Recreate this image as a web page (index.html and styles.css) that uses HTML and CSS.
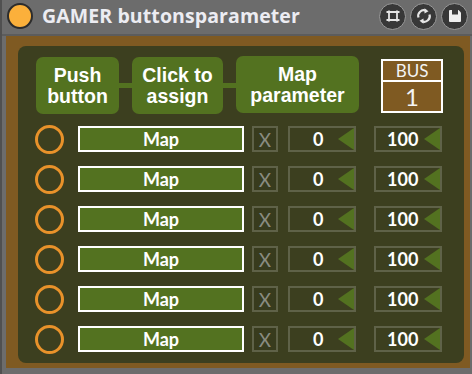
FILE: index.html
```html
<!DOCTYPE html>
<html>
<head>
<meta charset="utf-8">
<link rel="stylesheet" href="styles.css">
</head>
<body>
<div class="window">
  <div class="titlebar">
    <span class="dot"></span>
    <span class="title">GAMER buttonsparameter</span>
    <div class="tools">
      <span class="tool"><svg width="14" height="14" viewBox="-7 -7 14 14"><path d="M-6.5 -4 H6.5 M-6.5 4 H6.5 M-4 -5.5 V5.5 M4 -5.5 V5.5" stroke="#e6e6e6" stroke-width="1.8" fill="none"/></svg></span>
      <span class="tool"><svg width="16" height="16" viewBox="-8 -8 16 16"><path d="M-5.5 1.5 A5.5 5.5 0 0 1 2 -5.2" stroke="#e6e6e6" stroke-width="2.2" fill="none"/><path d="M5.5 -1.5 A5.5 5.5 0 0 1 -2 5.2" stroke="#e6e6e6" stroke-width="2.2" fill="none"/><path d="M0.5 -7.8 L4.5 -4.8 L0.5 -2.6 Z" fill="#e6e6e6"/><path d="M-0.5 7.8 L-4.5 4.8 L-0.5 2.6 Z" fill="#e6e6e6"/></svg></span>
      <span class="tool"><svg width="14" height="14" viewBox="0 0 14 14"><path d="M1.5 1 H10.5 L13 3.5 V12 A1 1 0 0 1 12 13 H2 A1 1 0 0 1 1 12 V2 Z" fill="#eeeeee"/><rect x="4" y="1" width="6" height="4.5" fill="#3a3a3a"/></svg></span>
    </div>
  </div>
  <div class="frame">
    <div class="panel">
      <div class="header">
        <div class="hbtn w1">Push<br>button</div>
        <div class="link"></div>
        <div class="hbtn w2">Click to<br>assign</div>
        <div class="link"></div>
        <div class="hbtn w3">Map<br>parameter</div>
        <div class="bus">
          <div class="bus-label">BUS</div>
          <div class="bus-val">1</div>
        </div>
      </div>
      <div class="rows">
        <div class="row"><span class="ring"></span><span class="map">Map</span><span class="xbox">X</span><span class="num n0">0<i class="tri"></i></span><span class="num n100">100<i class="tri"></i></span></div>
        <div class="row"><span class="ring"></span><span class="map">Map</span><span class="xbox">X</span><span class="num n0">0<i class="tri"></i></span><span class="num n100">100<i class="tri"></i></span></div>
        <div class="row"><span class="ring"></span><span class="map">Map</span><span class="xbox">X</span><span class="num n0">0<i class="tri"></i></span><span class="num n100">100<i class="tri"></i></span></div>
        <div class="row"><span class="ring"></span><span class="map">Map</span><span class="xbox">X</span><span class="num n0">0<i class="tri"></i></span><span class="num n100">100<i class="tri"></i></span></div>
        <div class="row"><span class="ring"></span><span class="map">Map</span><span class="xbox">X</span><span class="num n0">0<i class="tri"></i></span><span class="num n100">100<i class="tri"></i></span></div>
        <div class="row"><span class="ring"></span><span class="map">Map</span><span class="xbox">X</span><span class="num n0">0<i class="tri"></i></span><span class="num n100">100<i class="tri"></i></span></div>
      </div>
    </div>
  </div>
</div>
</body>
</html>
```
FILE: styles.css
```css
* { box-sizing: border-box; }
html, body { margin: 0; padding: 0; }
body { width: 472px; height: 374px; overflow: hidden; background: #6c6c6c; }

.window {
  width: 472px; height: 374px;
  display: flex; flex-direction: column;
  background: #6c6c6c;
  border-left: 2px solid #505050;
}

.titlebar {
  height: 36px;
  display: flex; align-items: center;
  padding: 0 4px 2px 5px;
  border-bottom: 2px solid #5c5c5c;
}
.dot {
  width: 26px; height: 26px; border-radius: 50%;
  background: #fbb03b; border: 2px solid #2c2c2c;
  flex: none;
}
.title {
  margin-left: 9px;
  font-family: "Open Sans", "DejaVu Sans", sans-serif;
  font-weight: 700; font-size: 19.5px; color: #ececf2;
  letter-spacing: 0.1px;
  line-height: 1;
}
.tools { margin-left: auto; display: flex; gap: 4px; }
.tool {
  width: 27px; height: 27px; border-radius: 50%;
  background: #383838; border: 1.5px solid #9a9a9a;
  display: flex; align-items: center; justify-content: center;
}

.frame {
  flex: 1;
  margin: 0 2px 6px 4px;
  background: #7f5a22;
  padding: 10px 6px 5px 12px;
  display: flex;
}
.panel {
  flex: 1;
  background: #3c3f1f;
  border-radius: 8px;
  padding: 11px 0 0 17px;
}

.header { display: flex; align-items: center; height: 57px; }
.hbtn {
  height: 57px;
  background: #537220;
  border-radius: 7px;
  color: #ffffff;
  font-family: "Liberation Sans", Arial, sans-serif;
  font-weight: 700; font-size: 19.5px; line-height: 21px;
  display: flex; align-items: center; justify-content: center;
  text-align: center;
}
.w1 { width: 83px; margin-left: 1px; }
.w2 { width: 91px; }
.w3 { width: 123px; margin-top: -2px; }
.link { width: 13px; height: 5px; background: #537220; }
.bus {
  margin-left: 22px;
  width: 62px; height: 54px;
  border: 2px solid #ffffff;
  background: #7f5a22;
  display: flex; flex-direction: column;
  color: #f4f4f4;
  font-family: Lato, "Open Sans", sans-serif;
}
.bus-label {
  height: 21px; border-bottom: 2px solid #ffffff;
  font-size: 17px; line-height: 20px; text-align: center; font-weight: 400;
}
.bus-val {
  flex: 1; font-size: 24px; line-height: 30px; text-align: center; font-weight: 400;
}

.rows { margin-top: 12px; display: flex; flex-direction: column; gap: 14px; }
.row { display: flex; align-items: center; height: 26px; }
.ring {
  width: 29px; height: 29px; border-radius: 50%;
  border: 3px solid #e8922a; flex: none;
}
.map {
  margin-left: 14px;
  width: 166px; height: 26px;
  border: 2px solid #ffffff;
  background: #537220;
  color: #ffffff;
  font-family: Lato, "Open Sans", sans-serif; font-weight: 700; font-size: 18px;
  display: flex; align-items: center; justify-content: center;
}
.xbox {
  margin-left: 8px;
  width: 26px; height: 26px;
  border: 2px solid #5f6248;
  background: #383b1d;
  color: #8a8c80;
  font-family: Lato, sans-serif; font-size: 19px;
  display: flex; align-items: center; justify-content: center;
}
.num {
  position: relative;
  width: 68px; height: 26px;
  border: 2px solid #5f6248;
  color: #ffffff;
  font-family: Lato, "Open Sans", sans-serif; font-weight: 700; font-size: 18px;
  display: flex; align-items: center;
}
.n0 { margin-left: 10px; padding-left: 23px; }
.n100 { margin-left: 18px; padding-left: 11px; }
.tri {
  position: absolute; right: 0; top: 0;
  width: 0; height: 0;
  border-top: 11px solid transparent;
  border-bottom: 11px solid transparent;
  border-right: 16px solid #537220;
}
```
